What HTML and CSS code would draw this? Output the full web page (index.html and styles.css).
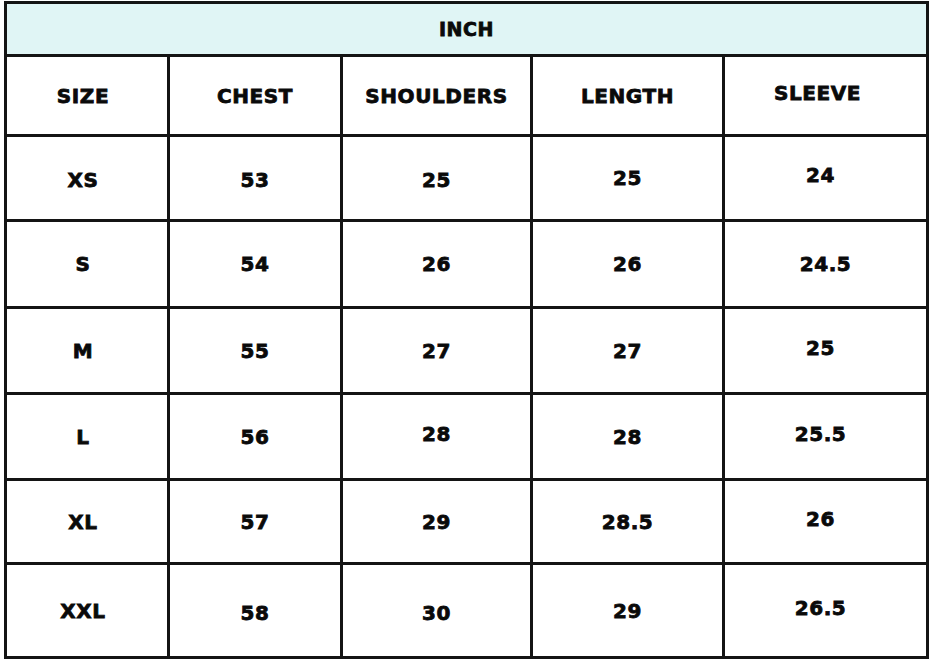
FILE: index.html
```html
<!DOCTYPE html>
<html lang="en">
<head>
<meta charset="utf-8">
<title>Size chart</title>
<link rel="stylesheet" href="styles.css">
</head>
<body>
<div class="chart">
  <div class="cell unit">INCH</div>

  <div class="cell size">SIZE</div>
  <div class="cell">CHEST</div>
  <div class="cell">SHOULDERS</div>
  <div class="cell">LENGTH</div>
  <div class="cell sleeve-head up">SLEEVE</div>

  <div class="cell size down">XS</div>
  <div class="cell down">53</div>
  <div class="cell down">25</div>
  <div class="cell">25</div>
  <div class="cell sleeve up">24</div>

  <div class="cell size">S</div>
  <div class="cell">54</div>
  <div class="cell">26</div>
  <div class="cell">26</div>
  <div class="cell">24.5</div>

  <div class="cell size">M</div>
  <div class="cell">55</div>
  <div class="cell">27</div>
  <div class="cell">27</div>
  <div class="cell sleeve up">25</div>

  <div class="cell size">L</div>
  <div class="cell">56</div>
  <div class="cell up">28</div>
  <div class="cell">28</div>
  <div class="cell sleeve up">25.5</div>

  <div class="cell size">XL</div>
  <div class="cell">57</div>
  <div class="cell">29</div>
  <div class="cell">28.5</div>
  <div class="cell sleeve up">26</div>

  <div class="cell size">XXL</div>
  <div class="cell down">58</div>
  <div class="cell down">30</div>
  <div class="cell">29</div>
  <div class="cell sleeve up">26.5</div>
</div>
</body>
</html>
```

FILE: styles.css
```css
html, body {
  margin: 0;
  padding: 0;
  background: #ffffff;
}

body {
  font-family: "DejaVu Sans", "Liberation Sans", sans-serif;
  font-weight: 700;
  color: #0a0a0a;
}

.chart {
  margin: 1px 0 0 4px;
  width: 919px;
  padding: 3px;
  background: #141414;
  display: grid;
  grid-template-columns: 160px 170px 187px 189px 201px;
  grid-template-rows: 50px 77px 82px 84px 83px 83px 81px 91px;
  gap: 3px;
}

.cell {
  background: #ffffff;
  display: flex;
  align-items: center;
  justify-content: center;
  font-size: 20px;
  letter-spacing: 0.6px;
  -webkit-text-stroke: 0.8px #0a0a0a;
}

.unit {
  grid-column: 1 / -1;
  background: #e0f5f5;
  font-size: 19px;
}

.size {
  padding-right: 8px;
}

.sleeve {
  padding-right: 10px;
}

.sleeve-head {
  padding-right: 16px;
}

.up {
  padding-bottom: 6px;
}

.down {
  padding-top: 4px;
}
```
